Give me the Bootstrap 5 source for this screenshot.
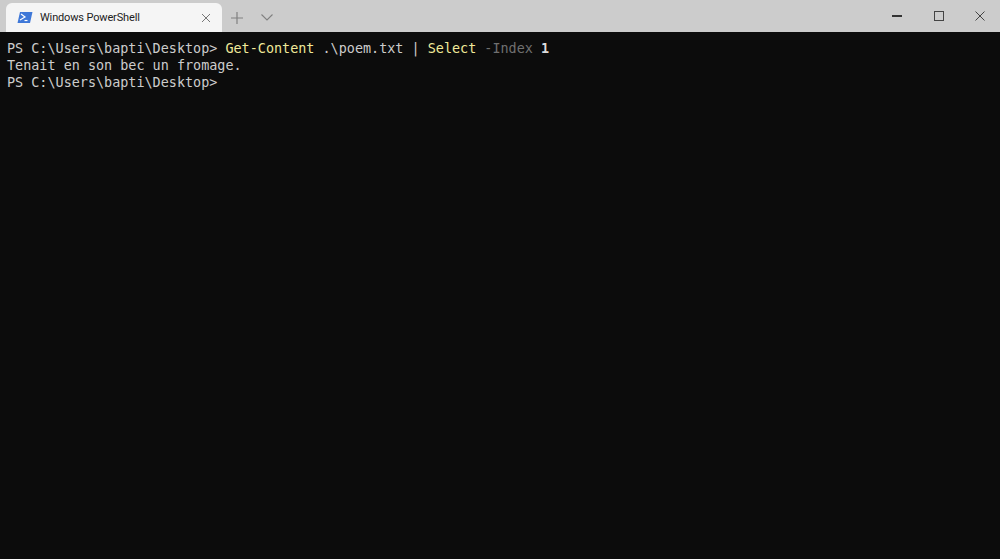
<!DOCTYPE html>
<html lang="en">
<head>
<meta charset="utf-8">
<title>Windows PowerShell</title>
<link href="https://cdn.jsdelivr.net/npm/bootstrap@5.3.0/dist/css/bootstrap.min.css" rel="stylesheet">
<style>
html,body{height:100%;margin:0;overflow:hidden;background:#0c0c0c}
.term-win{height:559px}
.title-strip{height:32px;background:#cccccc;flex:none}
.term-tab{width:216px;height:29px;margin-left:6px;margin-top:3px;background:#f5f5f5;border-radius:6px 6px 0 0;padding-left:11px;font:11px "Roboto","Noto Sans",sans-serif;letter-spacing:-.15px;color:#222;flex:none}
.term-tab .tab-name{margin-left:7px}
.tab-x{margin-left:auto;margin-right:11px}
.strip-tool{width:30px;height:32px;padding-top:3px;flex:none}
.win-ctl{height:32px;flex:none}
.ctl-min{width:42px}
.ctl-max{width:42px}
.ctl-close{width:40px}
.screen{flex:1;background:#0c0c0c;padding:8px 0 0 7px;font:13.45px/17px "DejaVu Sans Mono",monospace;color:#ccc;white-space:pre}
.screen .cmd{color:#f0e99a}
.screen .flag{color:#707070}
.screen .num{color:#dcdcdc;font-weight:700}
</style>
</head>
<body>
<div class="term-win d-flex flex-column">
  <div class="title-strip d-flex align-items-start">
    <div class="term-tab d-flex align-items-center">
      <svg width="16" height="13" viewBox="0 0 16 13"><path d="M3 1h12.5L13 12H.5z" fill="#3f78d8"/><path d="M4 3l4 3-5 3" fill="none" stroke="#fff" stroke-width="1.2"/><path d="M7.5 9.5h3" stroke="#fff" stroke-width="1.2"/></svg>
      <span class="tab-name">Windows PowerShell</span>
      <svg class="tab-x" width="10" height="10" viewBox="0 0 10 10"><path d="M1 1l8 8M9 1l-8 8" stroke="#777" stroke-width="1"/></svg>
    </div>
    <div class="strip-tool d-flex align-items-center justify-content-center">
      <svg width="12" height="12" viewBox="0 0 12 12"><path d="M6 0v12M0 6h12" stroke="#808080" stroke-width="1.2"/></svg>
    </div>
    <div class="strip-tool d-flex align-items-center justify-content-center">
      <svg width="12" height="7" viewBox="0 0 12 7"><path d="M.5.5L6 6 11.5.5" fill="none" stroke="#808080" stroke-width="1.1"/></svg>
    </div>
    <div class="ms-auto d-flex">
      <div class="win-ctl ctl-min d-flex align-items-center justify-content-center">
        <svg width="10" height="2" viewBox="0 0 10 2"><path d="M0 1h10" stroke="#333" stroke-width="2"/></svg>
      </div>
      <div class="win-ctl ctl-max d-flex align-items-center justify-content-center">
        <svg width="10" height="10" viewBox="0 0 10 10"><rect x=".5" y=".5" width="9" height="9" fill="none" stroke="#444" stroke-width="1"/></svg>
      </div>
      <div class="win-ctl ctl-close d-flex align-items-center justify-content-center">
        <svg width="10" height="10" viewBox="0 0 10 10"><path d="M.5.5l9 9M9.5.5l-9 9" stroke="#444" stroke-width="1"/></svg>
      </div>
    </div>
  </div>
  <div class="screen">PS C:\Users\bapti\Desktop&gt; <span class="cmd">Get-Content</span> .\poem.txt | <span class="cmd">Select</span> <span class="flag">-Index</span> <span class="num">1</span>
Tenait en son bec un fromage.
PS C:\Users\bapti\Desktop&gt;</div>
</div>
</body>
</html>
